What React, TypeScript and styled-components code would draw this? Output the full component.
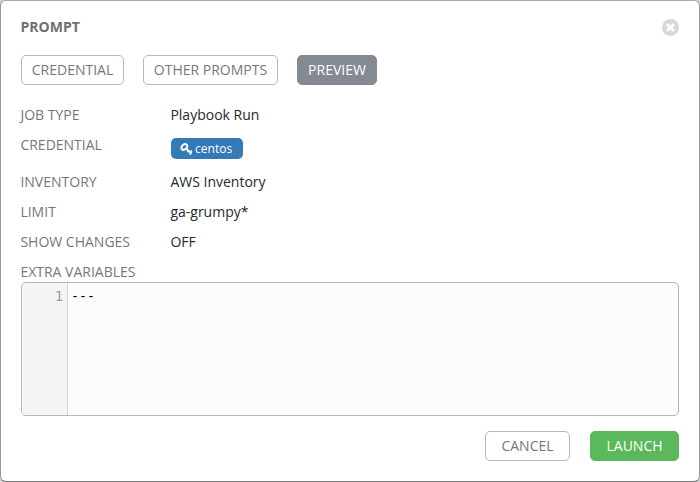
import React from "react";
import styled, { createGlobalStyle } from "styled-components";

const GlobalStyle = createGlobalStyle`
  * { box-sizing: border-box; }
  body {
    margin: 0;
    background: #d2d2d2;
    font-family: "Open Sans", sans-serif;
    font-size: 14px;
    line-height: 20px;
    color: #24292e;
    overflow: hidden;
  }
`;

const Dialog = styled.main`
  width: 700px;
  height: 482px;
  padding: 16px 20px 0;
  background: #fff;
  border: 1px solid #999;
  border-top-color: #a8a8a8;
  border-bottom-color: #757575;
  border-radius: 6px;
`;

const Header = styled.header`
  display: flex;
  align-items: center;
  justify-content: space-between;
  height: 20px;
`;

const Title = styled.h1`
  margin: 0 0 0 -0.5px;
  font-size: 14px;
  line-height: 20px;
  font-weight: 700;
  color: #707070;
`;

const CloseButton = styled.button`
  display: flex;
  padding: 0;
  border: 0;
  background: none;
`;

const Tabs = styled.nav`
  display: flex;
  gap: 19px;
  margin-top: 18px;
`;

const Button = styled.button<{ $width: number; $tone?: "active" | "success" }>`
  width: ${(p) => p.$width}px;
  height: 30px;
  padding: 0;
  border: 1px solid
    ${(p) => (p.$tone === "success" ? "#5cb85c" : p.$tone === "active" ? "#848992" : "#b7b7b7")};
  border-radius: 5px;
  background: ${(p) => (p.$tone === "success" ? "#5cb85c" : p.$tone === "active" ? "#848992" : "#fff")};
  color: ${(p) => (p.$tone ? "#fff" : "#777")};
  font: 14px/28px "Open Sans", sans-serif;
  white-space: nowrap;
`;

const Details = styled.dl`
  display: grid;
  grid-template-columns: 150px 1fr;
  grid-template-rows: 30px 37px 30px 30px 30px;
  margin: 20px 0 0;
`;

const Label = styled.dt`
  margin-left: -0.6px;
  color: #777;
`;

const Value = styled.dd`
  margin: 0 0 0 -0.6px;
`;

const Tag = styled.span`
  display: flex;
  align-items: center;
  gap: 2px;
  width: 72px;
  height: 21px;
  margin: 3px 0 0 0.6px;
  padding: 0 0 0 9px;
  border-radius: 5px;
  background: #337ab7;
  color: #fff;
  font-size: 12px;
  letter-spacing: 0.05px;
  line-height: 21px;
  font-weight: 500;
`;

const EditorLabel = styled.div`
  height: 20px;
  margin-left: -0.6px;
  color: #777;
`;

const Editor = styled.div`
  display: flex;
  height: 134px;
  border: 1px solid #b7b7b7;
  border-radius: 5px;
  background: #fcfcfc;
  font: 13.33px/20px "DejaVu Sans Mono", monospace;
  overflow: hidden;
`;

const Gutter = styled.div`
  width: 46px;
  padding: 4px 4px 0 0;
  border-right: 1px solid #d6d6d6;
  background: #f5f5f5;
  color: #999;
  text-align: right;
`;

const Code = styled.pre`
  margin: 0;
  padding: 4px 0 0 3px;
  font: inherit;
  color: #000;
`;

const Footer = styled.footer`
  display: flex;
  justify-content: flex-end;
  gap: 20px;
  margin-top: 15px;
`;

const CloseIcon = () => (
  <svg width="17" height="17" viewBox="0 0 17 17" aria-hidden="true">
    <circle cx="8.5" cy="8.5" r="8.4" fill="#d7d7d7" />
    <path d="M5 5l7 7M12 5l-7 7" stroke="#fff" strokeWidth="3" />
  </svg>
);

const KeyIcon = () => (
  <svg width="13" height="12" viewBox="0 0 13 12" fill="none" stroke="#fff" aria-hidden="true">
    <ellipse cx="4.3" cy="4" rx="3.2" ry="2.4" strokeWidth="1.9" transform="rotate(-40 4.3 4)" />
    <path d="M6.2 5.8l5.2 4.5" strokeWidth="1.9" />
    <path d="M7.4 9.3l1.7-1.9M9.6 11.6l1.8-1.9M10.6 8.8l1.3-1.2" strokeWidth="1.5" />
  </svg>
);

export default function App() {
  return (
    <>
      <GlobalStyle />
      <Dialog>
        <Header>
          <Title>PROMPT</Title>
          <CloseButton aria-label="Close"><CloseIcon /></CloseButton>
        </Header>
        <Tabs>
          <Button $width={103}>CREDENTIAL</Button>
          <Button $width={135}>OTHER PROMPTS</Button>
          <Button $width={80} $tone="active">PREVIEW</Button>
        </Tabs>
        <Details>
          <Label>JOB TYPE</Label>
          <Value>Playbook Run</Value>
          <Label>CREDENTIAL</Label>
          <Value><Tag><KeyIcon />centos</Tag></Value>
          <Label>INVENTORY</Label>
          <Value>AWS Inventory</Value>
          <Label>LIMIT</Label>
          <Value>ga-grumpy*</Value>
          <Label>SHOW CHANGES</Label>
          <Value>OFF</Value>
        </Details>
        <EditorLabel>EXTRA VARIABLES</EditorLabel>
        <Editor>
          <Gutter>1</Gutter>
          <Code>---</Code>
        </Editor>
        <Footer>
          <Button $width={85}>CANCEL</Button>
          <Button $width={89} $tone="success">LAUNCH</Button>
        </Footer>
      </Dialog>
    </>
  );
}
